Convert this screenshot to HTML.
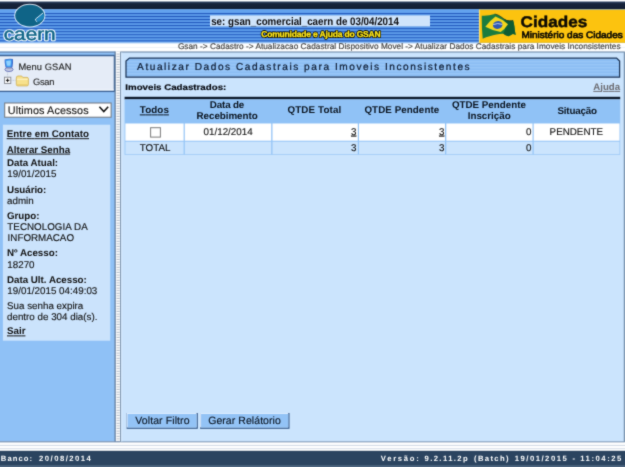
<!DOCTYPE html>
<html><head><meta charset="utf-8">
<style>
*{margin:0;padding:0;box-sizing:border-box;}
html,body{width:625px;height:467px;overflow:hidden;background:#fff;font-family:"Liberation Sans",sans-serif;color:#111;}
.t{position:absolute;white-space:nowrap;}
#bg{position:absolute;left:0;top:0;}
#all{position:absolute;left:0;top:0;width:625px;height:467px;will-change:transform;text-rendering:geometricPrecision;overflow:hidden;}
#bg{filter:url(#soft);}
</style></head><body><div id="all">
<svg id="bg" width="625" height="467" viewBox="0 0 625 467">
<defs>
 <filter id="soft" x="0" y="0" width="100%" height="100%" color-interpolation-filters="sRGB"><feConvolveMatrix order="3" kernelMatrix="0.025 0.09 0.025 0.09 0.54 0.09 0.025 0.09 0.025" edgeMode="duplicate" preserveAlpha="true"/></filter>
 <linearGradient id="nv" x1="0" y1="0" x2="0" y2="1"><stop offset="0" stop-color="#33486a"/><stop offset=".3" stop-color="#16233a"/><stop offset="1" stop-color="#131e33"/></linearGradient>
 <pattern id="st" x="0" y="13.05" width="8" height="3.04" patternUnits="userSpaceOnUse"><rect x="0" y="0" width="8" height="3.04" fill="#62a2ee"/><rect x="0" y="2.9" width="8" height="1.2" fill="#2057bc"/><rect x="0" y="-.14" width="8" height="1.1" fill="#2057bc"/></pattern>
 <pattern id="ts" x="0" y="58" width="8" height="3" patternUnits="userSpaceOnUse"><rect width="8" height="3" fill="#98c6f7"/><rect y="1.5" width="8" height="1.5" fill="#8bbdf3"/></pattern>
 <pattern id="dots" x="116" y="52" width="4" height="2.6" patternUnits="userSpaceOnUse"><rect width="4" height="2.6" fill="#fff"/><rect x=".6" y="1.5" width="3" height="1.1" fill="#b4bdca"/></pattern>
</defs>
<rect x="0" y="0" width="625" height="467" fill="#fff"/>
<!-- header -->
<rect x="0" y="1.5" width="625" height="7.9" fill="url(#nv)"/>
<rect x="0" y="9.4" width="625" height="33.4" fill="url(#st)"/>
<rect x="0" y="9.4" width="625" height="3.5" fill="#62a2ee"/>
<rect x="0" y="47" width="625" height=".8" fill="#ebf0f6"/>
<rect x="0" y="42.5" width="479" height=".9" fill="#a6cbf5"/>
<!-- se box -->
<rect x="210" y="15.4" width="220" height="11" fill="#cfe4fb"/>
<!-- cidades -->
<rect x="479" y="9.6" width="146" height="33.2" fill="#fcc30f"/>
<g>
  <path d="M481.8 15.7 Q488 16.2 494.7 14 Q498 14.5 500.7 16.6 L504.1 19.1 Q506.5 20.8 509.2 20.8 Q511.5 20.9 513.1 20.4 Q514 23 514.4 26.4 Q514.8 31 515.7 35 Q514 34 512.7 34.1 Q510.5 35.5 508.4 36.2 Q505.5 35.5 503.3 33.7 Q500 33.6 496.4 34.5 Q493 35 489.6 36.2 Q486 37 482.7 38.8 Q481.6 27 481.8 15.7 Z" fill="#1c7c3e"/>
  <path d="M504.1 19.1 Q506.5 20.8 509.2 20.8 Q511.5 20.9 513.1 20.4 Q514 23 514.4 26.4 Q514.8 31 515.7 35 Q514 34 512.7 34.1 Q510.5 35.5 508.4 36.2 Q505.5 35.5 503.3 33.7 Q507 28 504.1 19.1 Z" fill="#0f5c33"/>
  <path d="M485.3 26.8 Q490 20.5 495.5 16.6 Q502 19 508 24.3 Q505 29 500.7 32 Q492 30.5 485.3 26.8 Z" fill="#f3d61c"/>
  <ellipse cx="497.7" cy="25" rx="4.8" ry="3.9" fill="#2f58b0" transform="rotate(-8 497.7 25)"/>
  <path d="M493.2 24.6 Q497.5 22.6 502.3 24.4" stroke="#dfe8f6" stroke-width=".8" fill="none"/>
  <path d="M494.7 14 Q498 14.5 500.7 16.6 L504.1 19.1 Q506.5 20.8 509.2 20.8 Q511.5 20.9 513.1 20.4" stroke="#23351c" stroke-width=".9" fill="none" opacity=".8"/>
  <rect x="478.9" y="9.7" width="1" height="33" fill="#fde27a"/>
</g>
<text x="520.6" y="26.6" font-family="Liberation Sans" font-weight="bold" font-size="15.4" fill="#0d0b04" stroke="#0d0b04" stroke-width=".45" textLength="66.6" lengthAdjust="spacingAndGlyphs">Cidades</text>
<text x="521.4" y="38" font-family="Liberation Sans" font-size="9.4" fill="#0c0a03" stroke="#0c0a03" stroke-width=".6" textLength="101.4" lengthAdjust="spacingAndGlyphs">Ministério das Cidades</text>
<!-- logo -->
<ellipse cx="29.8" cy="15.6" rx="15.6" ry="11.8" fill="#e6f1fd" opacity=".9"/>
<ellipse cx="29.8" cy="15.6" rx="14.6" ry="10.8" fill="#0f6487"/>
<path d="M42.8 12.8 L36.2 19.2 L37 21.8 Q42 22 44.2 16.5 Z" fill="#1d84bd"/>
<path d="M42.8 13.2 L35.6 19 Q34.8 20.3 36.8 21.6" stroke="#e6f2ff" stroke-width=".9" fill="none" stroke-linecap="round"/>
<text x="3.7" y="39.7" font-family="Liberation Sans" font-size="17.8" fill="#0f6487" stroke="#f2f8ff" stroke-width="2.5" stroke-linejoin="round" textLength="52" lengthAdjust="spacingAndGlyphs">caern</text>
<text x="3.7" y="39.7" font-family="Liberation Sans" font-size="17.8" fill="#0f6487" stroke="#0f6487" stroke-width=".45" textLength="52" lengthAdjust="spacingAndGlyphs">caern</text>
<!-- left panel -->
<rect x="0" y="51.6" width="115.4" height="389.8" fill="#8fc1f6"/>
<rect x="0" y="51.5" width="115.4" height="1.2" fill="#6585b0"/>
<rect x="-3" y="55.5" width="117.5" height="35.8" fill="#e5ecf7" stroke="#3a6296" stroke-width="1.5"/>
<rect x="0" y="89.3" width="113.8" height="1.1" fill="#f6f9fd"/>
<!-- menu icons -->
<g>
 <path d="M4.6 59.6 Q8.5 58.2 12.9 58.9 Q13.4 63 12.4 67.6 Q8.8 68.4 5.6 67.6 Q4.5 63.5 4.6 59.6 Z" fill="#3a66c8"/>
 <path d="M5.2 60.1 Q8.4 59 11.8 59.5 Q12.2 63 11.4 66.8 Q8.6 67.4 6.2 66.8 Q5.2 63.5 5.2 60.1 Z" fill="#3f9cf2"/>
 <path d="M6.2 61 Q8.4 60.2 10.8 60.6 Q11 63 10.4 65.6 Q8.6 66 7 65.6 Q6.2 63.4 6.2 61 Z" fill="#8fd2ff"/>
 <ellipse cx="9" cy="69.5" rx="4.1" ry="2" fill="#c8cee4" stroke="#4656a8" stroke-width=".7"/>
 <path d="M7.4 67.6 H10.6 L11 69.2 H7 Z" fill="#9aa6cc"/>
 <rect x="4.5" y="77.2" width="6.3" height="6.3" fill="#fdfdfd" stroke="#85888f" stroke-width=".9"/>
 <path d="M5.9 80.35 H9.4 M7.65 78.6 V82.1" stroke="#111" stroke-width="1"/>
 <path d="M7.6 72.5 V76.6 M11.4 80.4 H15.6" stroke="#aab2c0" stroke-width=".6" stroke-dasharray="1 .7"/>
 <path d="M16.3 78 Q16.3 76 18 76 H21.2 Q22.2 76 22.8 77.4 H27 Q28.4 77.4 28.4 78.8 V84.4 Q28.4 85.9 27 85.9 H17.8 Q16.3 85.9 16.3 84.4 Z" fill="#f7e18d" stroke="#cfae52" stroke-width=".8"/>
 <path d="M17 79.3 H27.8" stroke="#fcf2c4" stroke-width="1.1"/>
 <path d="M17 84.6 H27.8" stroke="#ecd072" stroke-width="1"/>
</g>
<!-- select -->
<rect x="4.7" y="103" width="106.4" height="14.2" fill="#fff" stroke="#70757c" stroke-width="1"/>
<path d="M99.4 106.8 L103.8 111.5 L108.2 106.8" stroke="#111" stroke-width="1.55" fill="none"/>
<!-- info box -->
<rect x="2.9" y="124.7" width="107.3" height="216" fill="#cbe3fc"/>
<!-- separator -->
<rect x="115.4" y="51.6" width="5" height="390" fill="url(#dots)"/>
<rect x="114.5" y="51.6" width="1.2" height="390" fill="#5d7899"/>
<!-- main -->
<rect x="120.7" y="52" width="503.6" height="390" fill="#cbe4fd" stroke="#65809f" stroke-width="1"/>
<rect x="121.2" y="52.5" width="1" height="389" fill="#d9ecff"/>
<!-- bottom lines -->
<rect x="0" y="441.4" width="120" height="1.1" fill="#54739a"/>
<rect x="0" y="442.6" width="625" height="8.4" fill="#fff"/>
<rect x="0" y="444.9" width="625" height=".9" fill="#c9d3e0"/>
<rect x="0" y="448.2" width="625" height=".9" fill="#d5dde8"/>
<rect x="0" y="450.8" width="625" height="16.2" fill="#2b4460"/>
<rect x="0" y="465.3" width="625" height="1.7" fill="#516882"/>
<!-- title bar -->
<path d="M126 77.2 V61 L129.4 58 H616.6 L619.6 61 V77.2 Z" fill="url(#ts)" stroke="#1c3558" stroke-width="1.25"/>
<!-- table -->
<rect x="124.6" y="96.8" width="495.6" height="2.6" fill="#0e1a2b"/>
<rect x="124.6" y="99.4" width="495.6" height="23.6" fill="#90c2f6"/>
<rect x="124.6" y="123" width="495.6" height="31.8" fill="#94c4f6"/>
<g fill="#fff">
 <rect x="125.4" y="123.5" width="58.2" height="17.2"/><rect x="184.8" y="123.5" width="86.4" height="17.2"/><rect x="272.5" y="123.5" width="85.3" height="17.2"/><rect x="359" y="123.5" width="86" height="17.2"/><rect x="446.3" y="123.5" width="86.2" height="17.2"/><rect x="533.7" y="123.5" width="85.8" height="17.2"/>
</g>
<g fill="#cbe4fd">
 <rect x="125.4" y="141.7" width="58.2" height="12.5"/><rect x="184.8" y="141.7" width="86.4" height="12.5"/><rect x="272.5" y="141.7" width="85.3" height="12.5"/><rect x="359" y="141.7" width="86" height="12.5"/><rect x="446.3" y="141.7" width="86.2" height="12.5"/><rect x="533.7" y="141.7" width="85.8" height="12.5"/>
</g>
<rect x="150.6" y="127.7" width="9.8" height="9.4" fill="#fff" stroke="#7b7b7b" stroke-width="1"/>
<!-- buttons -->
<g>
 <rect x="126.6" y="413" width="71.2" height="15.8" fill="#2f5486"/>
 <rect x="126.6" y="413" width="70" height="14.5" fill="#dcecfe"/>
 <rect x="127.6" y="414" width="69" height="13.5" fill="#93c3f6"/>
 <rect x="200.1" y="413" width="89.4" height="15.8" fill="#2f5486"/>
 <rect x="200.1" y="413" width="88.2" height="14.5" fill="#dcecfe"/>
 <rect x="201.1" y="414" width="87.2" height="13.5" fill="#93c3f6"/>
</g>
<g font-family="Liberation Sans" fill="#111" text-rendering="geometricPrecision">
<text x="211.20" y="24.50" font-size="10.9" textLength="187.70" lengthAdjust="spacingAndGlyphs" font-weight="bold" fill="#0c0c10">se: gsan_comercial_caern de 03/04/2014</text>
<text x="261.20" y="36.90" font-size="8.5" textLength="119.50" lengthAdjust="spacing" font-weight="bold" fill="#000" stroke="#000" stroke-width="1.9" stroke-linejoin="round">Comunidade e Ajuda do GSAN</text><text x="261.20" y="36.90" font-size="8.5" textLength="119.50" lengthAdjust="spacing" font-weight="bold" fill="#ffe81a" stroke="#ffe81a" stroke-width=".3">Comunidade e Ajuda do GSAN</text>
<text x="177.90" y="49.00" font-size="8.25" textLength="442.60" lengthAdjust="spacing" stroke="#404040" stroke-width="0.15" fill="#404040">Gsan -&gt; Cadastro -&gt; Atualizacao Cadastral Dispositivo Movel -&gt; Atualizar Dados Cadastrais para Imoveis Inconsistentes</text>
<text x="18.50" y="69.60" font-size="9.3" textLength="52.90" lengthAdjust="spacing" stroke="#222" stroke-width="0.12" fill="#222">Menu GSAN</text><text x="32.90" y="84.50" font-size="9.3" textLength="21.60" lengthAdjust="spacing" stroke="#222" stroke-width="0.12" fill="#222">Gsan</text>
<text x="7.70" y="113.50" font-size="10.8" textLength="80.90" lengthAdjust="spacing" stroke="#111" stroke-width="0.12" fill="#111">Ultimos Acessos</text>
<text x="6.70" y="137.20" font-size="9.75" textLength="82.30" lengthAdjust="spacing" font-weight="bold" text-decoration="underline">Entre em Contato</text>
<text x="6.70" y="152.60" font-size="9.75" textLength="63.40" lengthAdjust="spacing" font-weight="bold" text-decoration="underline">Alterar Senha</text>
<text x="7.00" y="166.00" font-size="9.75" textLength="51.10" lengthAdjust="spacing" font-weight="bold">Data Atual:</text>
<text x="7.30" y="177.10" font-size="9.8" textLength="49.05" lengthAdjust="spacing" stroke="#111" stroke-width="0.12">19/01/2015</text>
<text x="7.00" y="192.70" font-size="9.75" textLength="39.20" lengthAdjust="spacing" font-weight="bold">Usuário:</text>
<text x="7.00" y="203.70" font-size="9.8" textLength="26.69" lengthAdjust="spacing" stroke="#111" stroke-width="0.12">admin</text>
<text x="7.00" y="218.50" font-size="9.75" textLength="32.49" lengthAdjust="spacing" font-weight="bold">Grupo:</text>
<text x="7.30" y="230.10" font-size="9.8" textLength="80.40" lengthAdjust="spacing" stroke="#111" stroke-width="0.12">TECNOLOGIA DA</text>
<text x="7.60" y="241.30" font-size="9.8" textLength="66.42" lengthAdjust="spacing" stroke="#111" stroke-width="0.12">INFORMACAO</text>
<text x="7.00" y="255.70" font-size="9.75" textLength="50.88" lengthAdjust="spacing" font-weight="bold">Nº Acesso:</text>
<text x="7.30" y="267.50" font-size="9.8" textLength="27.25" lengthAdjust="spacing" stroke="#111" stroke-width="0.12">18270</text>
<text x="7.00" y="282.90" font-size="9.75" textLength="79.83" lengthAdjust="spacing" font-weight="bold">Data Ult. Acesso:</text>
<text x="7.30" y="293.50" font-size="9.8" textLength="90.00" lengthAdjust="spacing" stroke="#111" stroke-width="0.12">19/01/2015 04:49:03</text>
<text x="7.00" y="309.00" font-size="9.8" textLength="76.28" lengthAdjust="spacing" stroke="#111" stroke-width="0.12">Sua senha expira</text>
<text x="7.00" y="320.00" font-size="9.8" textLength="90.44" lengthAdjust="spacing" stroke="#111" stroke-width="0.12">dentro de 304 dia(s).</text>
<text x="7.00" y="334.40" font-size="9.75" textLength="18.43" lengthAdjust="spacing" font-weight="bold" text-decoration="underline">Sair</text>
<text x="137.10" y="70.40" font-size="10.1" textLength="332.50" lengthAdjust="spacing" stroke="#0e1c33" stroke-width="0.22" fill="#0e1c33">Atualizar Dados Cadastrais para Imoveis Inconsistentes</text>
<text x="125.30" y="90.10" font-size="8.3" textLength="101.00" lengthAdjust="spacingAndGlyphs" font-weight="bold" fill="#05080f" stroke="#05080f" stroke-width=".15">Imoveis Cadastrados:</text>
<text x="593.30" y="89.90" font-size="9.65" textLength="26.80" lengthAdjust="spacing" font-weight="bold" fill="#6c6c72" text-decoration="underline">Ajuda</text>
<text x="139.80" y="113.40" font-size="9.8" textLength="29.10" lengthAdjust="spacing" font-weight="bold" fill="#0a1420" text-decoration="underline">Todos</text>
<text x="209.80" y="108.00" font-size="9.8" textLength="34.50" lengthAdjust="spacing" font-weight="bold" fill="#0a1420">Data de</text>
<text x="196.50" y="119.00" font-size="9.8" textLength="61.20" lengthAdjust="spacing" font-weight="bold" fill="#0a1420">Recebimento</text>
<text x="287.40" y="113.40" font-size="9.8" textLength="53.80" lengthAdjust="spacing" font-weight="bold" fill="#0a1420">QTDE Total</text>
<text x="364.40" y="113.40" font-size="9.8" textLength="74.80" lengthAdjust="spacing" font-weight="bold" fill="#0a1420">QTDE Pendente</text>
<text x="451.90" y="107.80" font-size="9.8" textLength="74.00" lengthAdjust="spacing" font-weight="bold" fill="#0a1420">QTDE Pendente</text>
<text x="467.70" y="119.00" font-size="9.8" textLength="43.00" lengthAdjust="spacing" font-weight="bold" fill="#0a1420">Inscrição</text>
<text x="557.40" y="113.50" font-size="9.8" textLength="39.60" lengthAdjust="spacing" font-weight="bold" fill="#0a1420">Situação</text>
<text x="203.60" y="134.60" font-size="9.8" textLength="49.05" lengthAdjust="spacing" stroke="#111" stroke-width="0.12" fill="#111">01/12/2014</text>
<text x="351.00" y="134.60" font-size="9.8" textLength="5.20" lengthAdjust="spacing" stroke="#111" stroke-width="0.12" fill="#111" text-decoration="underline">3</text>
<text x="439.00" y="134.60" font-size="9.8" textLength="5.20" lengthAdjust="spacing" stroke="#111" stroke-width="0.12" fill="#111" text-decoration="underline">3</text>
<text x="526.00" y="134.60" font-size="9.8" textLength="5.20" lengthAdjust="spacing" stroke="#111" stroke-width="0.12" fill="#111">0</text>
<text x="549.60" y="134.70" font-size="9.8" textLength="53.40" lengthAdjust="spacing" stroke="#111" stroke-width="0.12" fill="#111">PENDENTE</text>
<text x="139.80" y="151.30" font-size="9.8" textLength="30.70" lengthAdjust="spacing" stroke="#111" stroke-width="0.12" fill="#111">TOTAL</text>
<text x="351.00" y="151.30" font-size="9.8" textLength="5.20" lengthAdjust="spacing" stroke="#111" stroke-width="0.12" fill="#111">3</text>
<text x="439.00" y="151.30" font-size="9.8" textLength="5.20" lengthAdjust="spacing" stroke="#111" stroke-width="0.12" fill="#111">3</text>
<text x="526.00" y="151.30" font-size="9.8" textLength="5.20" lengthAdjust="spacing" stroke="#111" stroke-width="0.12" fill="#111">0</text>
<text x="135.30" y="423.90" font-size="10.5" textLength="54.20" lengthAdjust="spacing" stroke="#0a1420" stroke-width="0.12" fill="#0a1420">Voltar Filtro</text>
<text x="208.20" y="423.90" font-size="10.5" textLength="72.60" lengthAdjust="spacing" stroke="#0a1420" stroke-width="0.12" fill="#0a1420">Gerar Relátorio</text>
<text x="0.80" y="461.10" font-size="7.7" textLength="31.20" lengthAdjust="spacing" font-weight="bold" fill="#fff">Banco:</text>
<text x="39.10" y="461.10" font-size="7.7" textLength="51.80" lengthAdjust="spacing" font-weight="bold" fill="#fff">20/08/2014</text>
<text x="380.80" y="461.10" font-size="7.7" textLength="37.90" lengthAdjust="spacing" font-weight="bold" fill="#fff">Versão:</text>
<text x="424.50" y="461.10" font-size="7.7" textLength="43.20" lengthAdjust="spacing" font-weight="bold" fill="#fff">9.2.11.2p</text>
<text x="474.00" y="461.10" font-size="7.7" textLength="34.50" lengthAdjust="spacing" font-weight="bold" fill="#fff">(Batch)</text>
<text x="514.80" y="461.10" font-size="7.7" textLength="51.90" lengthAdjust="spacing" font-weight="bold" fill="#fff">19/01/2015</text>
<text x="572.50" y="461.10" font-size="7.7" textLength="3.20" lengthAdjust="spacing" font-weight="bold" fill="#fff">-</text>
<text x="580.20" y="461.10" font-size="7.7" textLength="41.20" lengthAdjust="spacing" font-weight="bold" fill="#fff">11:04:25</text>
</g>
</svg>
</div></body></html>
